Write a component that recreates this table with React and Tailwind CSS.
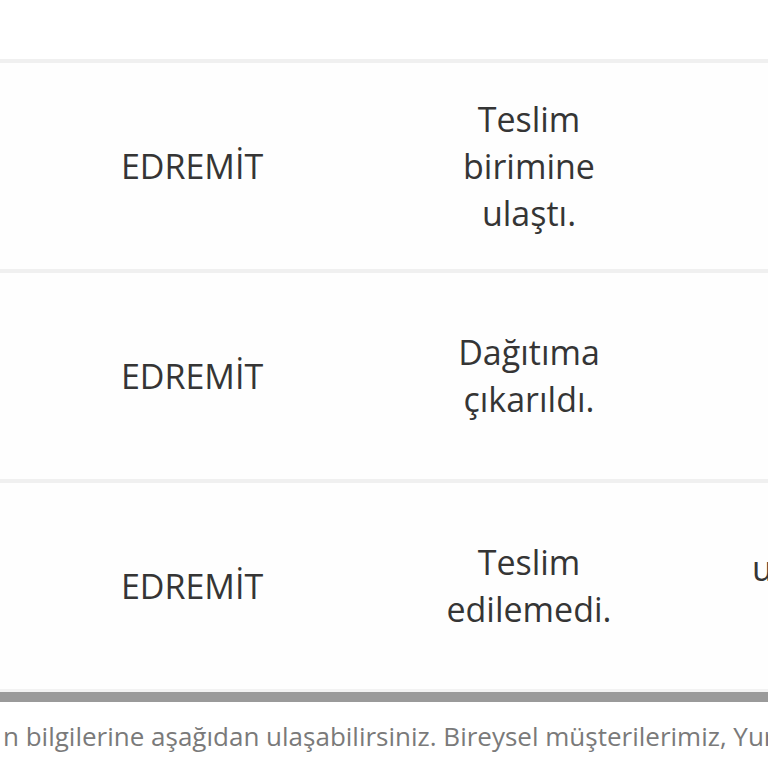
import React from 'react';

const rows = [
  { city: 'EDREMİT', status: ['Teslim', 'birimine', 'ulaştı.'], extra: '' },
  { city: 'EDREMİT', status: ['Dağıtıma', 'çıkarıldı.'], extra: '' },
  { city: 'EDREMİT', status: ['Teslim', 'edilemedi.'], extra: 'ulaşılamadı' },
];

const App = () => {
  return (
    <div
      className="w-[768px] h-[768px] overflow-hidden bg-white text-[#353535]"
      style={{ fontFamily: '"Open Sans", "Noto Sans", sans-serif' }}
    >
      <div className="h-[59px]" />

      {/* table */}
      <div className="w-[1100px]">
        {rows.map((row, i) => (
          <div
            key={i}
            className="flex h-[210px] border-t-4 border-[#f0f0f0] bg-[#fefefe]"
          >
            <div className="w-[384px] shrink-0 flex items-center justify-center text-[34px]">
              {row.city}
            </div>
            <div className="w-[290px] shrink-0 flex items-center justify-center text-center text-[34px] leading-[47px]">
              <div>
                {row.status.map((s, j) => (
                  <div key={j}>{s}</div>
                ))}
              </div>
            </div>
            <div className="w-[350px] shrink-0 flex items-start justify-start pt-[62px] pl-[78px] text-[34px] leading-[47px]">
              {row.extra}
            </div>
          </div>
        ))}
        <div className="h-[3px] bg-[#f2f2f2]" />
        <div className="h-[10px] bg-[#9a9a9a]" />
      </div>

      {/* footer text */}
      <div className="mt-[18px] pl-[3px] whitespace-nowrap text-[26px] leading-[32px] text-[#7a7a7a]">
        n bilgilerine aşağıdan ulaşabilirsiniz. Bireysel müşterilerimiz, Yurtiçi Kargo
      </div>
    </div>
  );
};

export default App;
